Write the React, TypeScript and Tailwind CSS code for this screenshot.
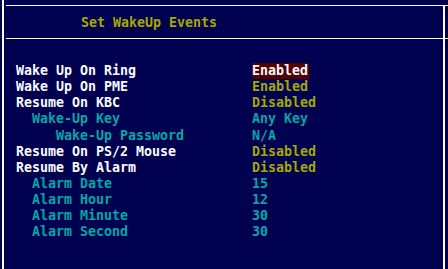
import React from "react";

type Row = { label: string; indent: string; labelColor: string; value: string; valueColor: string; selected?: boolean };

const W = "text-[#fcfcfc]";
const Y = "text-[#a8a800]";
const C = "text-[#00a8a8]";

const rows: Row[] = [
  { label: "Wake Up On Ring", indent: "pl-0", labelColor: W, value: "Enabled", valueColor: W, selected: true },
  { label: "Wake Up On PME", indent: "pl-0", labelColor: W, value: "Enabled", valueColor: Y },
  { label: "Resume On KBC", indent: "pl-0", labelColor: W, value: "Disabled", valueColor: Y },
  { label: "Wake-Up Key", indent: "pl-[16px]", labelColor: C, value: "Any Key", valueColor: C },
  { label: "Wake-Up Password", indent: "pl-[40px]", labelColor: C, value: "N/A", valueColor: C },
  { label: "Resume On PS/2 Mouse", indent: "pl-0", labelColor: W, value: "Disabled", valueColor: Y },
  { label: "Resume By Alarm", indent: "pl-0", labelColor: W, value: "Disabled", valueColor: Y },
  { label: "Alarm Date", indent: "pl-[16px]", labelColor: C, value: "15", valueColor: C },
  { label: "Alarm Hour", indent: "pl-[16px]", labelColor: C, value: "12", valueColor: C },
  { label: "Alarm Minute", indent: "pl-[16px]", labelColor: C, value: "30", valueColor: C },
  { label: "Alarm Second", indent: "pl-[16px]", labelColor: C, value: "30", valueColor: C },
];

export default function App() {
  return (
    <div
      className="w-[448px] h-[269px] bg-[#000050] flex overflow-hidden font-bold text-[13.3px] leading-[16px] whitespace-pre"
      style={{ fontFamily: '"DejaVu Sans Mono", "Liberation Mono", monospace' }}
    >
      <div className="ml-[2px] w-[2px] h-full bg-[#fcfcfc]" />
      <div className="ml-[2px] flex-1 flex flex-col">
        <div className="mt-[5px] h-px bg-[#fcfcfc]" />
        <div className="flex h-[32px]">
          <div className="w-[437px] pt-[9px] pl-[75px] text-[#a8a800]">Set WakeUp Events</div>
          <div className="w-[2px] bg-[#fcfcfc]" />
        </div>
        <div className="h-px bg-[#fcfcfc]" />
        <div className="flex flex-1">
          <div className="w-[437px] pt-[24px] pl-[10px] flex flex-col">
            {rows.map((r, i) => (
              <div key={i} className="flex h-[16.15px] leading-[16px]">
                <div className={`w-[236px] ${r.indent} ${r.labelColor}`}>{r.label}</div>
                <div className={r.valueColor}>
                  <span className={r.selected ? "inline-block bg-[#540000] w-[57px] h-[16px]" : ""}>{r.value}</span>
                </div>
              </div>
            ))}
          </div>
          <div className="w-[2px] bg-[#fcfcfc]" />
        </div>
      </div>
    </div>
  );
}
